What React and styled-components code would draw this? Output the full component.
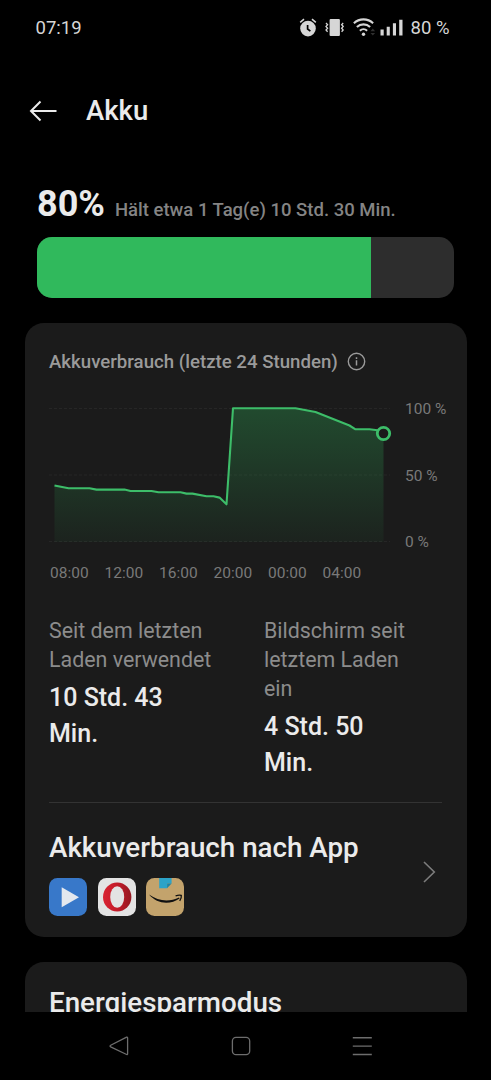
import styled, { createGlobalStyle } from 'styled-components';

const GlobalStyle = createGlobalStyle`
  * {
    box-sizing: border-box;
  }

  body {
    margin: 0;
    background: #000;
    font-family: Roboto, 'Liberation Sans', sans-serif;
    color: #ebebeb;
  }

  svg {
    display: block;
    flex: none;
  }
`;

const Screen = styled.div`
  width: 491px;
  height: 1080px;
  display: flex;
  flex-direction: column;
  overflow: hidden;
  background: #000;
`;

const StatusBar = styled.div`
  display: flex;
  align-items: center;
  justify-content: space-between;
  height: 55px;
  padding: 0 41.5px 0 35.5px;
  font-size: 18.5px;
  color: #d6d6d6;
  flex: none;
`;

const StatusIcons = styled.div`
  display: flex;
  align-items: center;
`;

const StatusText = styled.span`
  margin-left: 7.5px;
`;

const Header = styled.header`
  display: flex;
  align-items: center;
  gap: 29px;
  height: 111px;
  padding-left: 29px;
  flex: none;
`;

const Title = styled.h1`
  margin: 1px 0 0;
  font-size: 27.5px;
  font-weight: 500;
  line-height: 32px;
`;

const Content = styled.main`
  flex: 1;
  min-height: 0;
  overflow: hidden;
  padding: 14px 24.5px 0;
`;

const Summary = styled.section`
  padding: 0 12.5px;
  margin-bottom: 25px;
`;

const SummaryText = styled.div`
  display: flex;
  align-items: baseline;
  gap: 10px;
  height: 57px;
  padding-top: 1px;
`;

const Percent = styled.span`
  font-size: 36px;
  font-weight: 700;
  line-height: 46px;
`;

const Remaining = styled.span`
  font-size: 18.5px;
  font-weight: 500;
  color: #848484;
  white-space: nowrap;
`;

const Gauge = styled.div`
  height: 61px;
  border-radius: 15px;
  background: #2d2d2d;
  overflow: hidden;
`;

const GaugeFill = styled.div`
  height: 100%;
  background: #30b95c;
`;

const Card = styled.section`
  height: ${({ $height }) => $height}px;
  padding: 0 24.5px;
  margin-bottom: 25px;
  border-radius: 19px;
  background: #1b1b1b;
  overflow: hidden;
`;

const CardTitle = styled.div`
  display: flex;
  align-items: center;
  gap: 9px;
  height: 76px;
  padding-top: 1px;
  font-size: 18.65px;
  font-weight: 500;
  color: #9a9a9a;
  white-space: nowrap;
`;

const ChartRow = styled.div`
  display: flex;
  gap: 15px;
  height: 153px;
`;

const ChartSvg = styled.svg`
  overflow: visible;
`;

const ScaleLabels = styled.div`
  display: flex;
  flex-direction: column;
  justify-content: space-between;
  height: 153px;
  font-size: 15.5px;
  line-height: 20px;
  color: #797979;
  white-space: nowrap;
`;

const HourLabels = styled.div`
  display: grid;
  grid-template-columns: repeat(6, 54.5px);
  height: 64px;
  padding: 11px 0 0 1px;
  font-size: 15.5px;
  line-height: 20px;
  color: #797979;
`;

const Stats = styled.div`
  display: grid;
  grid-template-columns: 170px 150px;
  column-gap: 45px;
  height: 187px;
  border-bottom: 1px solid #333;
`;

const StatLabel = styled.div`
  font-size: 21.4px;
  line-height: 29px;
  color: #8c8c8c;
`;

const StatValue = styled.div`
  width: 130px;
  margin-top: 6px;
  font-size: 25px;
  font-weight: 500;
  line-height: 35.5px;
`;

const AppsRow = styled.div`
  display: flex;
  align-items: center;
  justify-content: space-between;
  padding: 28px 6px 0 0;
`;

const ModeRow = styled.div`
  padding-top: 24px;
`;

const Heading = styled.h2`
  margin: 0;
  font-size: 27.75px;
  font-weight: 500;
  line-height: 34px;
  white-space: nowrap;
`;

const AppIcons = styled.div`
  display: flex;
  gap: 10.6px;
  margin-top: 13px;
`;

const Chevron = styled.svg`
  margin-bottom: 4px;
`;

const NavBar = styled.nav`
  display: flex;
  height: 68px;
  flex: none;
  padding: 24px 0 0 108px;
  gap: 100px;
`;

const VibrateSvg = styled.svg`
  margin-left: 8px;
`;

const WifiSvg = styled.svg`
  margin-left: 9px;
`;

const SignalSvg = styled.svg`
  margin-left: 4.5px;
`;

const HOURS = ['08:00', '12:00', '16:00', '20:00', '00:00', '04:00'];

const STATS = [
  { label: 'Seit dem letzten Laden verwendet', value: '10 Std. 43 Min.' },
  { label: 'Bildschirm seit letztem Laden ein', value: '4 Std. 50 Min.' },
];

const LEVELS =
  '5.5,86.5 19.5,89.3 40.5,89.3 47.5,90.6 75.5,90.6 81.5,92 102.5,92 109.5,93.3 131.5,93.3 137.5,94.6 143.5,94.6 157.5,97.3 164.5,97.3 170.5,98.6 177.5,105.3 184,9.3 246.5,9.3 266.5,13 300.5,26.5 306.5,30.3 320.5,30.3 334.5,32';

function AlarmIcon() {
  return (
    <svg width="18" height="19" viewBox="0 0 18 19">
      <circle cx="9" cy="10.6" r="7.8" fill="#d6d6d6" />
      <path d="M8.6 7v4l2.8 2.2" fill="none" stroke="#000" strokeWidth="1.7" />
      <path d="M1.2 4.3 5 1.2M13 1.2l3.8 3.1" stroke="#d6d6d6" strokeWidth="1.6" />
    </svg>
  );
}

function VibrateIcon() {
  return (
    <VibrateSvg width="19" height="19" viewBox="0 0 19 19">
      <rect x="4.6" y="1" width="10.3" height="17" rx="1" fill="#d6d6d6" />
      <path
        d="M1 5l1.6 1.7L1 8.4l1.6 1.8L1 12l1.6 1.8M18.2 5l-1.6 1.7 1.6 1.7-1.6 1.8 1.6 1.8-1.6 1.8"
        fill="none"
        stroke="#d6d6d6"
        strokeWidth="1.3"
      />
    </VibrateSvg>
  );
}

function WifiIcon() {
  return (
    <WifiSvg width="23" height="19" viewBox="0 0 23 19">
      <g fill="none" stroke="#d6d6d6" strokeWidth="2.1">
        <path d="M.9 5.3a13.8 13.8 0 0 1 19.2 0" />
        <path d="M3.9 9.1a9.4 9.4 0 0 1 13.2 0" />
        <path d="M6.9 12.7a5.2 5.2 0 0 1 7.2 0" />
      </g>
      <circle cx="10.5" cy="16.3" r="1.7" fill="#d6d6d6" />
      <path d="M17.5 13.2l2.3-2.6 2.3 2.6zM17.5 15l2.3 2.6 2.3-2.6z" fill="#303030" />
    </WifiSvg>
  );
}

function SignalIcon() {
  return (
    <SignalSvg width="23" height="17" viewBox="0 0 23 17">
      <path d="M.5 10.5h3.2V16.5H.5zM6.7 7.7h3.1v8.8H6.7zM12.9 4.3H16v12.2h-3.1zM19.2.7h3.3v15.8h-3.3z" fill="#d6d6d6" />
    </SignalSvg>
  );
}

function BackIcon() {
  return (
    <svg width="28" height="22" viewBox="0 0 28 22">
      <path d="M27.5 11H2M11.5 1.5 2 11l9.5 9.5" fill="none" stroke="#ebebeb" strokeWidth="2" />
    </svg>
  );
}

function InfoIcon() {
  return (
    <svg width="19" height="19" viewBox="0 0 19 19">
      <circle cx="9.5" cy="9.5" r="8.2" fill="none" stroke="#9a9a9a" strokeWidth="1.4" />
      <path d="M9.5 8.3v5.2M9.5 5.3v1.7" stroke="#9a9a9a" strokeWidth="1.5" />
    </svg>
  );
}

function Chart() {
  return (
    <ChartSvg width="341" height="153" viewBox="0 0 341 153">
      <defs>
        <linearGradient id="area" x1="0" y1="9" x2="0" y2="143" gradientUnits="userSpaceOnUse">
          <stop offset="0" stopColor="#30b95c" stopOpacity="0.3" />
          <stop offset="1" stopColor="#30b95c" stopOpacity="0.05" />
        </linearGradient>
      </defs>
      <path d="M0 9.5h341M0 76h341M0 142.5h341" stroke="#262626" strokeDasharray="3 2" />
      <polygon points={`5.5,143 ${LEVELS} 334.5,143`} fill="url(#area)" />
      <polyline points={LEVELS} fill="none" stroke="#3dbd69" strokeWidth="2.1" strokeLinejoin="round" />
      <circle cx="334.5" cy="34.5" r="6.2" fill="#1b1b1b" stroke="#3dbd69" strokeWidth="2.8" />
    </ChartSvg>
  );
}

function PlayerIcon() {
  return (
    <svg width="38" height="38" viewBox="0 0 38 38">
      <rect width="38" height="38" rx="8.5" fill="#3878c9" />
      <path d="M12.7 9.2v20L30 19.2z" fill="#e4e8ee" />
    </svg>
  );
}

function OperaIcon() {
  return (
    <svg width="38" height="38" viewBox="0 0 38 38">
      <defs>
        <linearGradient id="opera" x1="0" y1="0" x2="1" y2="0">
          <stop offset="0" stopColor="#d92332" />
          <stop offset="0.5" stopColor="#c31b29" />
          <stop offset="1" stopColor="#941820" />
        </linearGradient>
      </defs>
      <rect width="38" height="38" rx="8.5" fill="#e3e3e3" />
      <ellipse cx="19.2" cy="19" rx="14.2" ry="14.5" fill="url(#opera)" />
      <ellipse cx="19.2" cy="19" rx="7" ry="10.8" fill="#e3e3e3" />
    </svg>
  );
}

function ParcelIcon() {
  return (
    <svg width="38" height="38" viewBox="0 0 38 38">
      <rect width="38" height="38" rx="8.5" fill="#c3a36c" />
      <path d="M13.2 0h12.4v5.5l-4.4.1-.2 4.7h-7.8z" fill="#2ca3c8" />
      <path d="M25.6 5.5 21 10.3l.2-4.7z" fill="#1d84a5" />
      <path d="M3 16.6c9.6 6.9 20.8 7.4 30 2.8l.6 1C24.5 27 11 26.3 3 16.6z" fill="#111" />
      <path d="M29.6 17.8c2.6-.9 4.6-.9 5.7-.4.3 1.8-.2 3.4-1.6 5.4" fill="none" stroke="#111" strokeWidth="1.3" />
    </svg>
  );
}

function ChevronIcon() {
  return (
    <Chevron width="13" height="22" viewBox="0 0 13 22">
      <path d="M1 1l10.3 10L1 21" fill="none" stroke="#7c7c7c" strokeWidth="1.6" />
    </Chevron>
  );
}

function NavIcons() {
  return (
    <>
      <svg width="22" height="22" viewBox="0 0 22 22">
        <path d="M18.6 1.2 2.7 9.2q-1.4.8 0 1.7l15.9 7.6q1 .3 1-.8V2q0-1.2-1-.8z" fill="none" stroke="#6d6d6d" strokeWidth="1.3" />
      </svg>
      <svg width="22" height="22" viewBox="0 0 22 22">
        <rect x="2.4" y="1.4" width="17.3" height="17.3" rx="3.6" fill="none" stroke="#6d6d6d" strokeWidth="1.3" />
      </svg>
      <svg width="22" height="22" viewBox="0 0 22 22">
        <path d="M.8 1.7h19M.8 10.1h19M.8 18.5h19" stroke="#6d6d6d" strokeWidth="1.4" />
      </svg>
    </>
  );
}

export default function App() {
  const level = 80;

  return (
    <Screen>
      <GlobalStyle />
      <StatusBar>
        <span>07:19</span>
        <StatusIcons>
          <AlarmIcon />
          <VibrateIcon />
          <WifiIcon />
          <SignalIcon />
          <StatusText>{level} %</StatusText>
        </StatusIcons>
      </StatusBar>

      <Header>
        <BackIcon />
        <Title>Akku</Title>
      </Header>

      <Content>
        <Summary>
          <SummaryText>
            <Percent>{level}%</Percent>
            <Remaining>Hält etwa 1 Tag(e) 10 Std. 30 Min.</Remaining>
          </SummaryText>
          <Gauge>
            <GaugeFill style={{ width: `${level}%` }} />
          </Gauge>
        </Summary>

        <Card $height={614}>
          <CardTitle>
            Akkuverbrauch (letzte 24 Stunden)
            <InfoIcon />
          </CardTitle>
          <ChartRow>
            <Chart />
            <ScaleLabels>
              <span>100 %</span>
              <span>50 %</span>
              <span>0 %</span>
            </ScaleLabels>
          </ChartRow>
          <HourLabels>
            {HOURS.map((hour) => (
              <span key={hour}>{hour}</span>
            ))}
          </HourLabels>
          <Stats>
            {STATS.map(({ label, value }) => (
              <div key={label}>
                <StatLabel>{label}</StatLabel>
                <StatValue>{value}</StatValue>
              </div>
            ))}
          </Stats>
          <AppsRow>
            <div>
              <Heading>Akkuverbrauch nach App</Heading>
              <AppIcons>
                <PlayerIcon />
                <OperaIcon />
                <ParcelIcon />
              </AppIcons>
            </div>
            <ChevronIcon />
          </AppsRow>
        </Card>

        <Card $height={120}>
          <ModeRow>
            <Heading>Energiesparmodus</Heading>
          </ModeRow>
        </Card>
      </Content>

      <NavBar>
        <NavIcons />
      </NavBar>
    </Screen>
  );
}
